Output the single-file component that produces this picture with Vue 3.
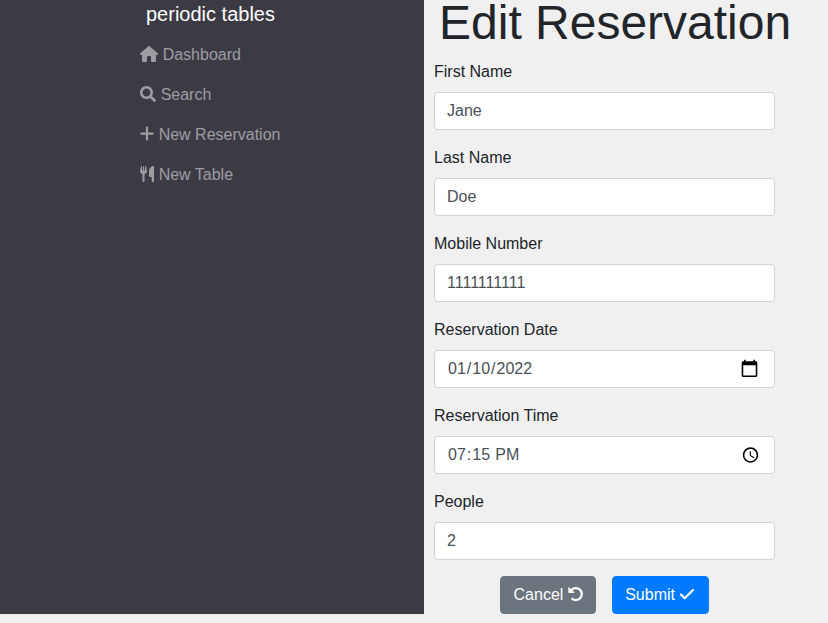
<script setup>
import { ref } from 'vue'

const links = [
  { label: 'Dashboard', w: 576, path: 'M575.8 255.5c0 18-15 32.1-32 32.1h-32l.7 160.2c0 2.7-.2 5.4-.5 8.1V472c0 22.1-17.9 40-40 40H392c-22.1 0-40-17.9-40-40V352c0-17.7-14.3-32-32-32H256c-17.7 0-32 14.3-32 32v120c0 22.1-17.9 40-40 40H104c-22.1 0-40-17.9-40-40V287.6H32c-18 0-32-14-32-32.1c0-9 3-17 10-24L266.4 8c7-7 15-8 22-8s15 2 21 7L564.8 231.5c8 7 12 15 11 24z' },
  { label: 'Search', w: 512, path: 'M505 442.7L405.3 343c-4.5-4.5-10.6-7-17-7H372c27.6-35.3 44-79.7 44-128C416 93.1 322.9 0 208 0S0 93.1 0 208s93.1 208 208 208c48.3 0 92.7-16.4 128-44v16.3c0 6.4 2.5 12.5 7 17l99.7 99.7c9.4 9.4 24.6 9.4 33.9 0l28.3-28.3c9.4-9.4 9.4-24.6.1-34zM208 336c-70.7 0-128-57.2-128-128 0-70.7 57.2-128 128-128 70.7 0 128 57.2 128 128 0 70.7-57.2 128-128 128z' },
  { label: 'New Reservation', w: 448, path: 'M260 52c0-20-16-36-36-36s-36 16-36 36V204H44c-20 0-36 16-36 36s16 36 36 36H188V428c0 20 16 36 36 36s36-16 36-36V276H404c20 0 36-16 36-36s-16-36-36-36H260V52z' },
  { label: 'New Table', w: 448, path: 'M448 32V480c0 17.7-14.3 32-32 32s-40-14.3-40-32V352H336c-26 0-48-22-48-48V160C288 70 365 0 416 0c17.7 0 32 14.3 32 32zM64 16C64 7.8 57.9 1 49.7 .1S34.2 4.6 32.4 12.5L2.1 148.8C.7 155.1 0 161.5 0 167.9c0 45.9 35.1 83.6 80 87.7V480c0 17.7 14.3 32 32 32s32-14.3 32-32V255.6c44.9-4.1 80-41.8 80-87.7c0-6.4-.7-12.8-2.1-19.1L191.6 12.5c-1.8-8-9.3-13.3-17.4-12.4S160 7.8 160 16V150.2c0 5.4-4.4 9.8-9.8 9.8c-5.1 0-9.3-3.9-9.8-9L127.9 14.6C127.2 6.3 120.3 0 112 0s-15.2 6.3-15.9 14.6L83.7 151c-.5 5.1-4.7 9-9.8 9c-5.4 0-9.8-4.4-9.8-9.8V16z' }
]

const fields = ref([
  { id: 'first-name', label: 'First Name', type: 'text', value: 'Jane' },
  { id: 'last-name', label: 'Last Name', type: 'text', value: 'Doe' },
  { id: 'mobile', label: 'Mobile Number', type: 'tel', value: '1111111111' },
  { id: 'date', label: 'Reservation Date', type: 'date', value: '2022-01-10' },
  { id: 'time', label: 'Reservation Time', type: 'time', value: '19:15' },
  { id: 'people', label: 'People', type: 'text', value: '2' }
])
</script>

<template>
  <div class="layout">
    <nav class="sidebar">
      <div class="menu">
        <a class="brand">periodic tables</a>
        <a v-for="link in links" :key="link.label" class="link">
          <svg class="icon" :viewBox="`0 0 ${link.w} 512`" :style="{ width: link.w / 32 + 'px' }"><path :d="link.path" /></svg>
          {{ link.label }}
        </a>
      </div>
    </nav>
    <main class="content">
      <h1>Edit Reservation</h1>
      <form @submit.prevent>
        <div v-for="f in fields" :key="f.id" class="group">
          <label :for="f.id">{{ f.label }}</label>
          <input :id="f.id" v-model="f.value" :type="f.type" />
        </div>
        <div class="actions">
          <button type="button" class="cancel">
            Cancel
            <svg class="icon undo" viewBox="0 0 15 16">
              <path d="M0.3 1.6Q0.3 1 0.9 1.2L6.3 6.2Q6.6 7 5.8 7H1Q0.3 7 0.3 6.3Z" />
              <path class="arc" d="M3.2 4.2A6 6 0 1 1 4.2 12.9" />
            </svg>
          </button>
          <button type="submit" class="submit">
            Submit
            <svg class="icon check" viewBox="0 0 16 16"><path class="arc" d="M2 8.6L5.7 12.3L14 4" /></svg>
          </button>
        </div>
      </form>
    </main>
  </div>
</template>

<style>
body {
  background: #f0f0f0;
  overflow: hidden;
}
</style>

<style scoped>
.layout,
.layout * {
  box-sizing: border-box;
}
.layout {
  display: flex;
  height: 614px;
  font: 16px/24px "Liberation Sans", Arial, sans-serif;
  color: #212529;
}
.sidebar {
  flex: 0 0 424px;
  display: flex;
  justify-content: center;
  background: #3c3b44;
}
.menu {
  width: 144px;
}
.brand {
  display: block;
  height: 35px;
  padding-left: 6px;
  font-size: 20px;
  line-height: 28px;
  color: #fff;
}
.link {
  display: block;
  padding: 8px 0;
  color: #9d9da1;
  white-space: nowrap;
}
.link .icon {
  margin-right: 0.2px;
}
.icon {
  height: 16px;
  fill: currentColor;
  overflow: visible;
  vertical-align: -2px;
}
.content {
  flex: 1;
  padding-left: 10px;
}
h1 {
  margin: -6px 0 8px 5px;
  font-size: 48px;
  line-height: 58px;
  font-weight: 400;
  white-space: nowrap;
}
form {
  width: 341px;
}
.group {
  margin-bottom: 16px;
}
label {
  display: block;
  margin-bottom: 8px;
}
input {
  display: block;
  width: 100%;
  height: 38px;
  padding: 6px 12px;
  font: inherit;
  color: #495057;
  background: #fff;
  border: 1px solid #ced4da;
  border-radius: 4px;
}
input[type="date"]::-webkit-calendar-picker-indicator {
  transform: translateX(-2.5px) scale(1.25);
}
input[type="time"]::-webkit-calendar-picker-indicator {
  transform: translateY(-0.5px) scale(1.08);
}
.actions {
  display: flex;
  justify-content: center;
  gap: 16px;
}
button {
  height: 38px;
  padding: 6px 12.2px;
  font: inherit;
  color: #fff;
  border: 1px solid;
  border-radius: 4px;
  white-space: nowrap;
}
.cancel {
  background: #6c757d;
  border-color: #6c757d;
}
.submit {
  background: #007bff;
  border-color: #007bff;
}
.undo {
  width: 15px;
}
.check {
  width: 16px;
}
.arc {
  fill: none;
  stroke: currentColor;
  stroke-width: 2.2;
  stroke-linecap: round;
  stroke-linejoin: round;
}
</style>
